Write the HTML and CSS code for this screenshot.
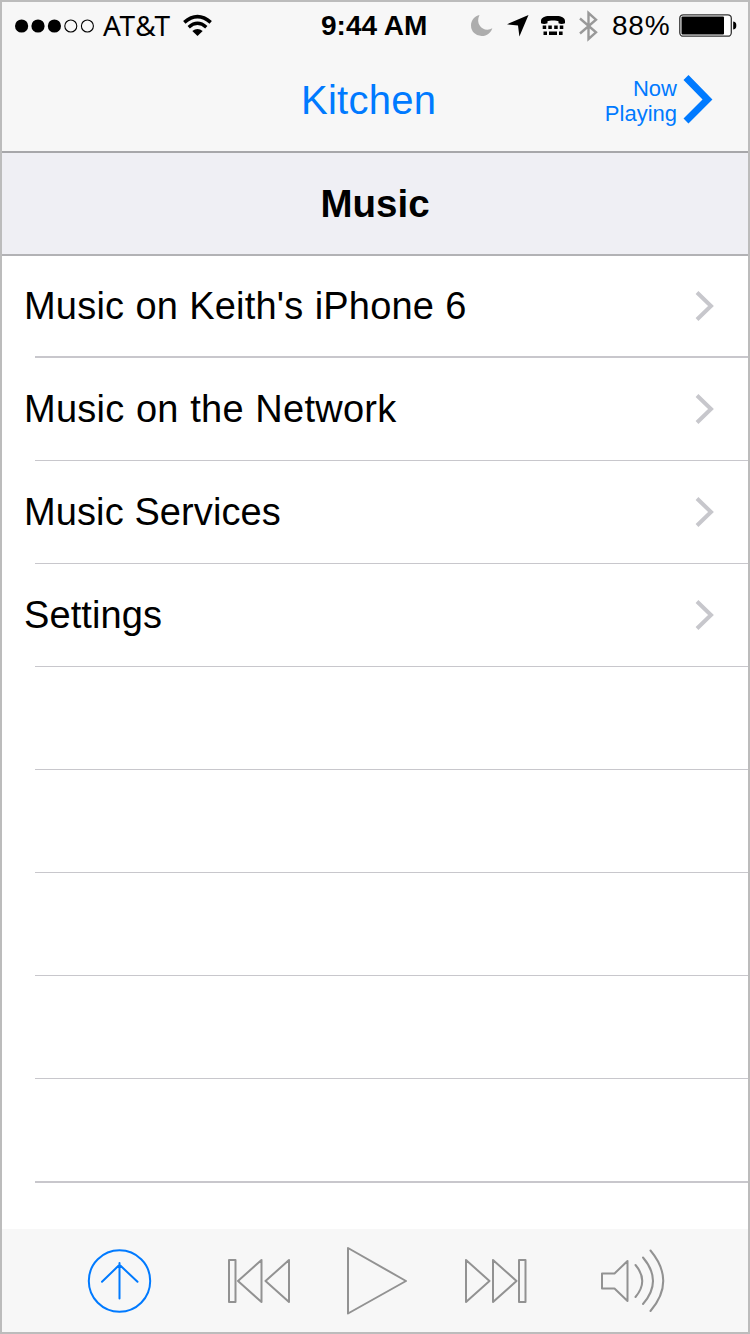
FILE: index.html
```html
<!DOCTYPE html>
<html lang="en">
<head>
<meta charset="utf-8">
<title>Music</title>
<link rel="stylesheet" href="styles.css">
</head>
<body>
<div class="screen">
  <header class="top">
    <div class="status">
      <svg class="dots" viewBox="0 0 80 14"><circle cx="6.6" cy="7" r="6.6"/><circle cx="23" cy="7" r="6.6"/><circle cx="39.4" cy="7" r="6.6"/><g fill="none" stroke="#000" stroke-width="1.1"><circle cx="55.8" cy="7" r="6"/><circle cx="72.4" cy="7" r="6"/></g></svg>
      <span class="carrier">AT&amp;T</span>
      <svg class="wifi" viewBox="0 0 30 22"><g fill="none" stroke="#000"><path d="M1.3 7.400Q14.500-4 27.700 7.400" stroke-width="3.600"/><path d="M5.700 12.200Q14.500 4.400 23.300 12.200" stroke-width="3.400"/></g><path d="M9.300 16Q14.500 11.800 19.700 16L14.500 21Z"/></svg>
      <span class="time">9:44 AM</span>
      <svg class="moon" viewBox="0 0 22 22"><path d="M8.500 0C4 1 0 5 0 10.500A10.600 10.600 0 0 0 10.700 21.100C16 21.100 20.200 17.500 21.300 13.300C13.500 18 3.500 10 8.500 0Z" fill="#adadad"/></svg>
      <svg class="arrow" viewBox="0 0 22 22"><path d="M21.500 0L12.400 21.500L11 10.600L0 9.300Z"/></svg>
      <svg class="tty" viewBox="0 0 24 20"><path d="M0 7.300V5C0 1.500 4 0 8 0H16C20 0 24 1.500 24 5V7.300Q20.500 8.500 17.500 7.300V5.300C16 4.300 8 4.300 6.500 5.300V7.300Q3 8.500 0 7.300Z"/><path d="M1.700 9.500h3.500v3.600H1.700zM7.300 9.500h3.500v3.600H7.300zM13.200 9.500h3.500v3.600h-3.500zM18.800 9.500h3.500v3.600h-3.500zM2.500 15.500h3.500v3.600H2.500zM8 15.500h8v3.600H8zM18 15.500h3.600v3.600H18z"/></svg>
      <svg class="bluetooth" viewBox="0 0 20 32"><path d="M1 8.500L17 22.300L9.500 29V3L17 9.700L1 23.500" fill="none" stroke="#999" stroke-width="2.400"/></svg>
      <span class="percent">88%</span>
      <svg class="battery" viewBox="0 0 58 24"><rect x=".8" y=".8" width="51.500" height="21.400" rx="3.500" fill="#fff" stroke="#333" stroke-width="1.300"/><rect x="2.500" y="2.500" width="42.500" height="18" rx="1"/><path d="M54.200 7.500C57 8 57.300 9.500 57.300 11.500S57 15 54.200 15.500Z"/></svg>
    </div>
    <nav class="nav">
      <span class="room">Kitchen</span>
      <a class="now"><span class="now-label">Now<br>Playing</span><svg class="now-chevron" viewBox="0 0 30 50"><path d="M3 2.500L24.500 24.500L3 46" fill="none" stroke="#007aff" stroke-width="7"/></svg></a>
    </nav>
  </header>
  <h1 class="title">Music</h1>
  <ul class="list">
    <li class="row first"><span class="label keith">Music on Keith's iPhone 6</span><svg class="chevron" viewBox="0 0 20 32"><path d="M2 2.500L16 16L2 29.500"/></svg></li>
    <li class="row"><span class="label network">Music on the Network</span><svg class="chevron" viewBox="0 0 20 32"><path d="M2 2.500L16 16L2 29.500"/></svg></li>
    <li class="row"><span class="label">Music Services</span><svg class="chevron" viewBox="0 0 20 32"><path d="M2 2.500L16 16L2 29.500"/></svg></li>
    <li class="row"><span class="label">Settings</span><svg class="chevron" viewBox="0 0 20 32"><path d="M2 2.500L16 16L2 29.500"/></svg></li>
    <li class="row"></li><li class="row"></li><li class="row"></li><li class="row"></li><li class="row last"></li>
  </ul>
  <footer class="controls">
    <svg class="up" viewBox="0 0 64 64"><g fill="none" stroke="#007aff" stroke-width="2"><circle cx="31.500" cy="32" r="30.700"/><path d="M31.500 49.500V14M14 32.800L31.500 15.800L49.500 32.800" stroke-linecap="round"/></g></svg>
    <svg class="prev" viewBox="0 0 64 46"><path d="M2 2h6.500v42H2zM34.500 2v42L11 23zM62 2v42L38.500 23z"/></svg>
    <svg class="play" viewBox="0 0 62 70"><path d="M2 2L60 35L2 67.500z"/></svg>
    <svg class="next" viewBox="0 0 64 46"><path d="M2 2v42L25.500 23zM29 2v42L52.500 23zM55 2h6.500v42H55z"/></svg>
    <svg class="volume" viewBox="0 0 66 66"><path d="M2 25.500H14.500L27.500 13V53L14.500 40.500H2zM35.500 17Q49 33 35.500 49M43 9.500Q63 33 43 56M50.500 2.500Q76 33 50.500 63"/></svg>
  </footer>
</div>
</body>
</html>
```
FILE: styles.css
```css
* { box-sizing: border-box; }
body { margin: 0; background: #fff; font-family: "Liberation Sans", Arial, sans-serif; color: #000; }
svg { display: block; overflow: visible; }
.screen { width: 750px; height: 1334px; border: 2px solid #bcbcbc; display: flex; flex-direction: column; background: #fff; }
.top { height: 151px; background: #f7f7f7; border-bottom: 2px solid #a7a7aa; }
.status { height: 48px; padding-left: 13px; display: grid; grid-template-columns: 88px 80px 138px 150px 36px 34px 38px 33px 67px 58px; align-items: center; white-space: nowrap; line-height: 48px; }
.dots { width: 80px; height: 14px; }
.carrier { font-family: "Noto Sans", sans-serif; font-size: 28px; letter-spacing: 0.6px; line-height: 44px; padding-bottom: 3px; }
.wifi { width: 30px; height: 22px; }
.time { font-weight: 700; font-size: 28px; }
.moon, .arrow { width: 22px; height: 22px; }
.tty { width: 24px; height: 20px; }
.bluetooth { width: 20px; height: 32px; }
.percent { font-size: 28px; letter-spacing: 0.8px; }
.battery { width: 58px; height: 24px; }
.nav { height: 101px; display: grid; grid-template-columns: 299px 1fr auto; padding-right: 35px; color: #007aff; }
.room { grid-column: 2; font-size: 40px; line-height: 100px; letter-spacing: 0.25px; }
.now { display: flex; gap: 6px; padding-top: 25px; }
.now-label { font-size: 22px; line-height: 25px; text-align: right; padding-top: 1px; }
.now-chevron { width: 30px; height: 50px; }
.title { margin: 0; height: 103px; border-bottom: 2px solid #b2b2b5; background: #efeff4; font-size: 38.5px; line-height: 102px; text-align: center; font-weight: bold; }
.list { list-style: none; margin: 0; padding: 0; flex: 1; }
.row { margin-left: 33px; height: 103px; border-bottom: 1px solid #c8c7cc; display: flex; align-items: center; justify-content: space-between; padding: 0 33px 1px 0; }
.first { height: 102px; border-bottom-width: 2px; }
.last { height: 104px; border-bottom-width: 2px; }
.label { margin-left: -11px; font-size: 38px; line-height: 44px; letter-spacing: 0.1px; white-space: nowrap; }
.keith { letter-spacing: 0.2px; word-spacing: 0.4px; }
.network { letter-spacing: 0.25px; word-spacing: 0.7px; }
.chevron { width: 20px; height: 32px; fill: none; stroke: #c7c7cc; stroke-width: 4; }
.controls { height: 103px; background: #f7f7f7; display: grid; grid-template-columns: 139px 119px 118px 136px 66px; padding-left: 86px; align-items: center; }
.controls svg { fill: none; stroke: #929292; stroke-width: 2; stroke-linejoin: round; stroke-linecap: round; }
.up { width: 64px; height: 64px; }
.prev, .next { width: 64px; height: 46px; }
.play { width: 62px; height: 70px; }
.volume { width: 66px; height: 66px; }
```
